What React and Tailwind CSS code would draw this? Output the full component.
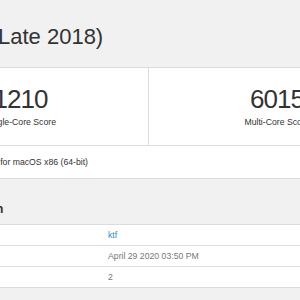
const rows = [
  { label: 'User', value: 'ktf', link: true },
  { label: 'Upload Date', value: 'April 29 2020 03:50 PM' },
  { label: 'Views', value: '2' },
];

function ScoreCell({ score, label, className = '' }) {
  return (
    <div className={`flex flex-col items-center pt-[18px] pb-[17px] ${className}`}>
      <div className="text-[26px] leading-[26px] tracking-[-1px] text-[#333]">{score}</div>
      <div className="mt-[4px] text-[8.7px] leading-[12px] text-[#333]">{label}</div>
    </div>
  );
}

export default function App() {
  return (
    <div
      className="w-[300px] h-[300px] overflow-hidden bg-[#f1f1f1]"
      style={{ fontFamily: '"Liberation Sans", Arial, sans-serif' }}
    >
      <h1 className="pt-[26px] mb-[19px] -ml-[2px] text-[22px] leading-[22px] text-[#333] whitespace-nowrap">
        Late 2018)
      </h1>

      <div className="-ml-[108px] w-[514px]">
        {/* scores */}
        <div className="bg-white border border-[#dcdcdc]">
          <div className="grid grid-cols-2 border-b border-[#dcdcdc]">
            <ScoreCell score="1210" label="Single-Core Score" className="border-r border-[#dcdcdc]" />
            <ScoreCell score="6015" label="Multi-Core Score" />
          </div>
          <div className="px-[12px] py-[10px] text-[8.7px] leading-[12px] text-[#333] whitespace-nowrap">
            Geekbench 5.1.0 Tryout for macOS x86 (64-bit)
          </div>
        </div>

        {/* result information */}
        <div className="mt-[15px] border-b border-[#dcdcdc] pl-[1px] py-[7px] text-[12.5px] leading-[16px] font-bold text-[#333]">
          Result Information
        </div>
        <div className="bg-white border-x border-[#dcdcdc]">
          {rows.map((r) => (
            <div key={r.label} className="grid grid-cols-[207px_1fr] h-[21px] border-b border-[#dcdcdc] text-[8.7px] leading-[12px]">
              <div className="flex items-center pl-[9px] text-[#333]">{r.label}</div>
              <div className={`flex items-center pl-[8px] ${r.link ? 'text-[#2b8ad4]' : 'text-[#777]'}`}>{r.value}</div>
            </div>
          ))}
        </div>
      </div>
    </div>
  );
}
